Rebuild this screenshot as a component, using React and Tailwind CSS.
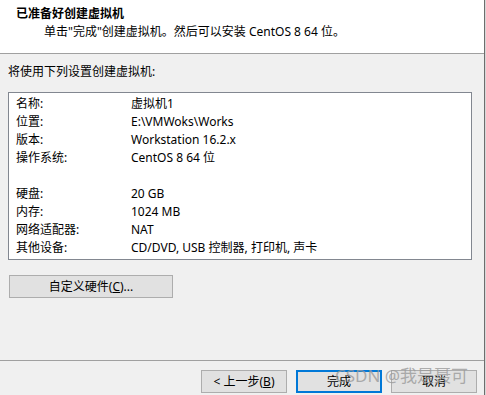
import React from "react";

const rows = [
  ["名称:", "虚拟机1"],
  ["位置:", "E:\\VMWoks\\Works"],
  ["版本:", "Workstation 16.2.x"],
  ["操作系统:", "CentOS 8 64 位"],
  ["", ""],
  ["硬盘:", "20 GB"],
  ["内存:", "1024 MB"],
  ["网络适配器:", "NAT"],
  ["其他设备:", "CD/DVD, USB 控制器, 打印机, 声卡"],
];

export default function App() {
  return (
    <div
      className="relative flex w-[486px] h-[395px] overflow-hidden text-[12px] text-black"
      style={{ fontFamily: '"Noto Sans", "Noto Sans CJK SC", sans-serif' }}
    >
      <div className="flex flex-col w-[484px] h-full bg-[#f0f0f0]">
        {/* header */}
        <div className="h-[53px] bg-white pt-[6px] pl-[16px]">
          <div className="font-bold leading-[16px]">已准备好创建虚拟机</div>
          <div className="pl-[28px] mt-[2px] leading-[16px]">
            单击"完成"创建虚拟机。然后可以安装 CentOS 8 64 位。
          </div>
        </div>
        <div className="h-px bg-[#a0a0a0]" />
        {/* body */}
        <div className="h-[306px] px-[8px] pt-[10px]">
          <div className="leading-[16px]">将使用下列设置创建虚拟机:</div>
          <div className="mt-[12px] w-[464px] h-[168px] border border-[#828790] bg-white pt-[2px] px-[7px]">
            {rows.map(([k, v], i) => (
              <div key={i} className="flex h-[18px] items-center leading-[18px]">
                <div className="w-[115px]">{k}</div>
                <div>{v}</div>
              </div>
            ))}
          </div>
          <button className="mt-[15px] ml-px w-[164px] h-[23px] border border-[#adadad] bg-[#e1e1e1] leading-[20px]">
            自定义硬件(<span className="underline">C</span>)...
          </button>
        </div>
        <div className="h-px bg-[#a0a0a0]" />
        {/* footer */}
        <div className="flex-1 flex justify-end items-start pt-[9px] pr-[7px] gap-[9px]">
          <button className="w-[86px] h-[23px] border border-[#adadad] bg-[#e1e1e1] leading-[20px]">
            &lt; 上一步(<span className="underline">B</span>)
          </button>
          <button className="w-[86px] h-[23px] border-2 border-[#0078d7] bg-[#e1e1e1] leading-[18px]">
            完成
          </button>
          <button className="w-[86px] h-[23px] border border-[#adadad] bg-[#e1e1e1] leading-[20px]">
            取消
          </button>
        </div>
      </div>
      <div className="w-px h-full bg-[#6d6d6d]" />
      <div className="w-px h-full bg-[#d8d8d8]" />
      <div className="absolute left-[335px] top-[366px] text-[17px] leading-[20px] text-[#9a9a9a]/80 whitespace-nowrap">
        CSDN @我是聂可
      </div>
    </div>
  );
}
